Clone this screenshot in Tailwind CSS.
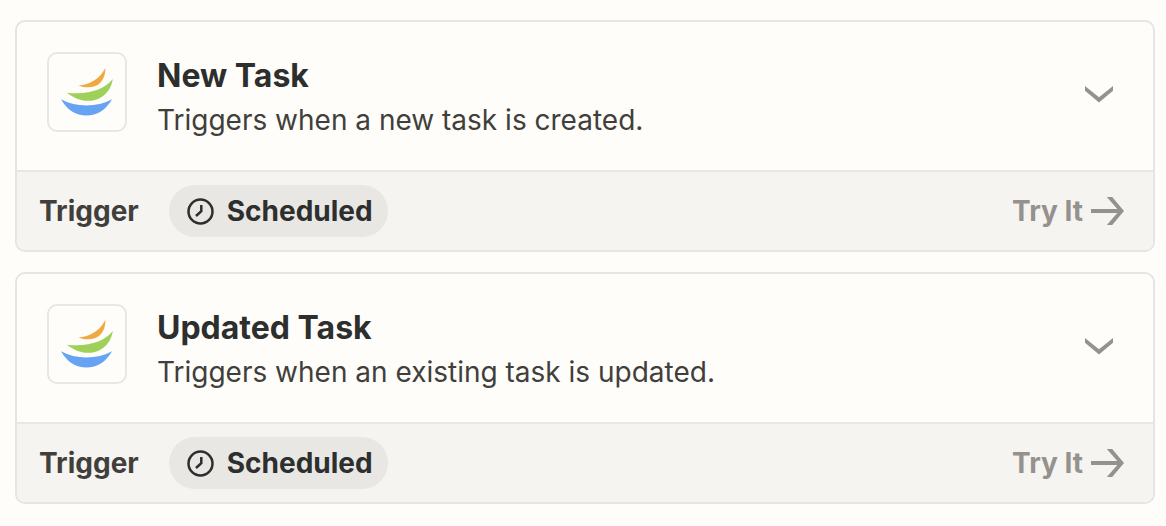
<!DOCTYPE html>
<html lang="en">

<head>
    <meta charset="UTF-8">
    <meta name="viewport" content="width=device-width, initial-scale=1.0">
    <title>Triggers</title>
    <script src="https://cdn.jsdelivr.net/npm/@tailwindcss/browser@4"></script>
</head>

<body class="bg-[#fffdf9] font-['Inter',sans-serif] text-[#2d2e2e]">
    <!-- shared icons -->
    <svg class="hidden" xmlns="http://www.w3.org/2000/svg">
        <symbol id="logo" viewBox="0 0 76 76">
            <path fill="#efa941" d="M56.3 14C52.500 21.500 45 30 29.500 31.500C37 34.500 46 34 51 29C55 25 56.500 20 56.300 14Z"></path>
            <path fill="#9ed05a" d="M63.800 25C55 35.500 40 41 18 38.700C29 47.500 42 49 51 44C59 39.500 62.500 33 63.800 25Z"></path>
            <path fill="#66a3f3" d="M12 45.200C27 53.500 48 53.500 63 45.200C57 56 48 61.500 37.500 61.500C27 61.500 18 56 12 45.200Z"></path>
        </symbol>
        <symbol id="clock" viewBox="0 0 27 27" fill="none" stroke="currentColor" stroke-width="2.500">
            <circle cx="13.500" cy="13.500" r="12"></circle>
            <path d="M14.300 7V13.300L9 18"></path>
        </symbol>
        <symbol id="chevron" viewBox="0 0 28 17">
            <path fill="currentColor" d="M0 0L14 11.200L28 0V4.700L14 16.500L0 4.700Z"></path>
        </symbol>
        <symbol id="arrow" viewBox="0 0 34 28">
            <path fill="currentColor" d="M1 12H27.300L16.800 0H22.200L34 14L22.200 28H16.800L27.300 16H1Z"></path>
        </symbol>
    </svg>

    <main class="flex flex-col gap-5 pl-[15px] pr-[11px] py-5">
        <article class="border-2 border-[#e6e5e5] rounded-[10px] overflow-hidden">
            <div class="flex items-start p-[30px]">
                <div class="size-20 shrink-0 border-2 border-[#e8e7e4] rounded-[10px]">
                    <svg class="size-full"><use href="#logo"></use></svg>
                </div>
                <div class="ml-[30px] flex-1">
                    <h2 class="text-[32px] leading-12 font-bold">New Task</h2>
                    <p class="text-[28px] leading-10 text-[#413f3c]">Triggers when a new task is created.</p>
                </div>
                <button type="button" aria-label="Show details" class="mt-[34px] mr-[10px] text-[#95928e]">
                    <svg class="w-7 h-[17px]"><use href="#chevron"></use></svg>
                </button>
            </div>
            <div class="flex items-center border-t-2 border-[#e8e7e4] bg-[#f5f4f1] pl-[22px] pr-[29px] py-[13px] text-[28px] font-bold">
                <span class="text-[#413f3c]">Trigger</span>
                <span class="ml-[30px] flex h-13 items-center gap-[13px] rounded-full bg-[#e8e7e4] pl-[18px] pr-[15px]">
                    <svg class="size-[27px]"><use href="#clock"></use></svg>
                    Scheduled
                </span>
                <a href="#" class="ml-auto flex items-center gap-[7px] text-[#95928e]">
                    Try It
                    <svg class="w-[34px] h-7"><use href="#arrow"></use></svg>
                </a>
            </div>
        </article>

        <article class="border-2 border-[#e6e5e5] rounded-[10px] overflow-hidden">
            <div class="flex items-start p-[30px]">
                <div class="size-20 shrink-0 border-2 border-[#e8e7e4] rounded-[10px]">
                    <svg class="size-full"><use href="#logo"></use></svg>
                </div>
                <div class="ml-[30px] flex-1">
                    <h2 class="text-[32px] leading-12 font-bold">Updated Task</h2>
                    <p class="text-[28px] leading-10 text-[#413f3c]">Triggers when an existing task is updated.</p>
                </div>
                <button type="button" aria-label="Show details" class="mt-[34px] mr-[10px] text-[#95928e]">
                    <svg class="w-7 h-[17px]"><use href="#chevron"></use></svg>
                </button>
            </div>
            <div class="flex items-center border-t-2 border-[#e8e7e4] bg-[#f5f4f1] pl-[22px] pr-[29px] py-[13px] text-[28px] font-bold">
                <span class="text-[#413f3c]">Trigger</span>
                <span class="ml-[30px] flex h-13 items-center gap-[13px] rounded-full bg-[#e8e7e4] pl-[18px] pr-[15px]">
                    <svg class="size-[27px]"><use href="#clock"></use></svg>
                    Scheduled
                </span>
                <a href="#" class="ml-auto flex items-center gap-[7px] text-[#95928e]">
                    Try It
                    <svg class="w-[34px] h-7"><use href="#arrow"></use></svg>
                </a>
            </div>
        </article>
    </main>
</body>

</html>
